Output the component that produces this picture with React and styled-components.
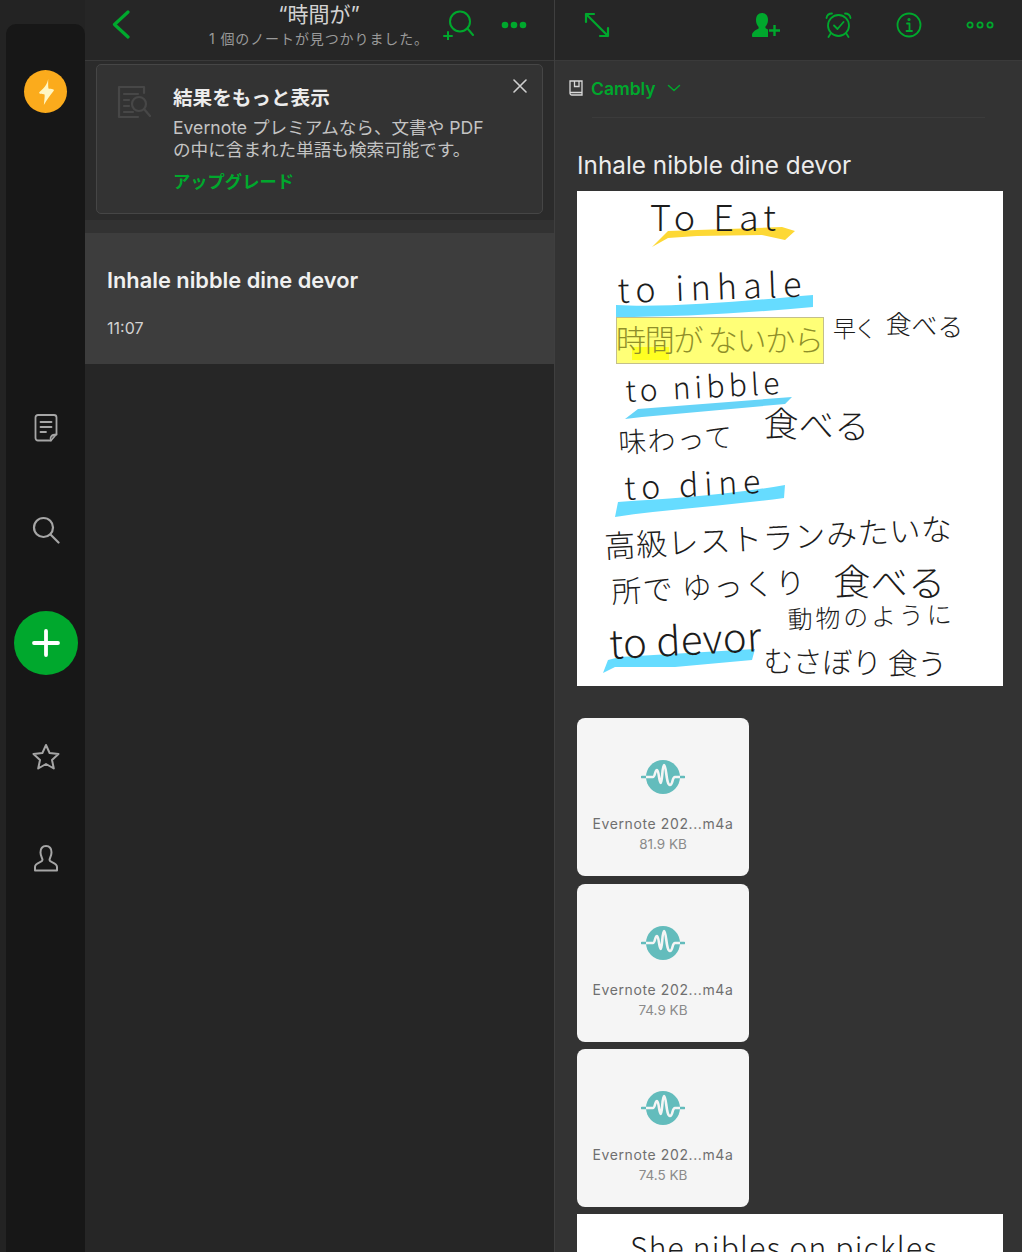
import React from 'react';
import styled, { createGlobalStyle } from 'styled-components';

const GREEN = '#00a82d';
const FONT = 'Inter, "Noto Sans CJK JP", sans-serif';

const attachments = [
  { name: 'Evernote 202...m4a', size: '81.9 KB' },
  { name: 'Evernote 202...m4a', size: '74.9 KB' },
  { name: 'Evernote 202...m4a', size: '74.5 KB' },
];

// the handwritten note: real text fitted to the widths of the strokes in the picture
const inks = [
  { t: 'To Eat', x: 73, y: 40, w: 126, s: 36 },
  { t: 'to inhale', x: 41, y: 112, w: 184, s: 34, r: -2 },
  { t: '時間が ないから', x: 39, y: 160, w: 208, s: 30, c: '#8f8f2a' },
  { t: '早く', x: 256, y: 146, w: 44, s: 23 },
  { t: '食べる', x: 308, y: 142, w: 78, s: 26, r: 3 },
  { t: 'to nibble', x: 49, y: 211, w: 154, s: 30, r: -3 },
  { t: '味わって', x: 42, y: 262, w: 114, s: 28, r: -3 },
  { t: '食べる', x: 186, y: 245, w: 106, s: 35, r: 2 },
  { t: 'to dine', x: 48, y: 309, w: 136, s: 32, r: -3 },
  { t: '高級レストランみたいな', x: 28, y: 367, w: 348, s: 31, r: -3 },
  { t: '所で ゆっくり', x: 35, y: 412, w: 194, s: 30, r: -3 },
  { t: '食べる', x: 256, y: 404, w: 112, s: 37, r: 1 },
  { t: '動物のように', x: 211, y: 438, w: 164, s: 25, r: -2 },
  { t: 'to devor', x: 33, y: 468, w: 152, s: 40, r: -3 },
  { t: 'むさぼり 食う', x: 186, y: 481, w: 184, s: 30, r: 1 },
];

const GlobalStyle = createGlobalStyle`
  html, body {
    margin: 0;
    padding: 0;
    height: 100%;
    background: #262626;
  }
  body {
    font-family: ${FONT};
    overflow: hidden;
  }
`;

const Page = styled.div`
  width: 1022px;
  height: 1252px;
  display: grid;
  grid-template-columns: 85px 470px 467px;
  overflow: hidden;
  background: #262626;
`;

const RailColumn = styled.div`
  padding: 24px 0 0 6px;
  background: #232323;
`;

const Rail = styled.nav`
  height: 100%;
  display: flex;
  flex-direction: column;
  align-items: center;
  padding: 46px 0 0;
  box-sizing: border-box;
  border-radius: 10px 10px 0 0;
  background: #171717;
`;

const Bolt = styled.div`
  width: 43px;
  height: 43px;
  margin-bottom: 264px;
  border-radius: 50%;
  background: #fbab1c;
  display: flex;
  align-items: center;
  justify-content: center;
`;

const RailSlot = styled.div`
  height: ${(p) => (p.$wide ? 124 : 102)}px;
  display: flex;
  align-items: center;
  justify-content: center;
  color: #a6a6a6;
`;

const AddButton = styled.div`
  width: 64px;
  height: 64px;
  border-radius: 50%;
  background: ${GREEN};
  display: flex;
  align-items: center;
  justify-content: center;
`;

const ListColumn = styled.section`
  display: flex;
  flex-direction: column;
  border-right: 1px solid #3f3f3f;
  background: #262626;
`;

const Bar = styled.header`
  height: 61px;
  flex: none;
  box-sizing: border-box;
  border-bottom: 1px solid #3a3a3a;
  background: #262626;
  color: ${GREEN};
`;

const ListBar = styled(Bar)`
  display: grid;
  grid-template-columns: 1fr auto 1fr;
  align-items: center;
  padding: 0 26px 13px 25px;
`;

const BarActions = styled.div`
  display: flex;
  align-items: center;
  justify-content: flex-end;
  gap: 25px;
`;

const BackSlot = styled.div`
  display: flex;
`;

const SearchTitle = styled.div`
  align-self: start;
  padding-top: 3px;
  text-align: center;
`;

const Query = styled.div`
  margin-bottom: 2px;
  font-size: 21px;
  line-height: 24px;
  color: #d2d2d2;
`;

const Found = styled.div`
  font-size: 14px;
  line-height: 20px;
  letter-spacing: 0.9px;
  color: #9a9a9a;
`;

const Banner = styled.div`
  flex: none;
  height: 159px;
  padding: 3px 11px 6px;
  box-sizing: border-box;
  background: #2b2b2b;
`;

const Upsell = styled.div`
  position: relative;
  height: 150px;
  display: flex;
  gap: 21px;
  padding: 20px 20px 0;
  box-sizing: border-box;
  border: 1px solid #464646;
  border-radius: 5px;
  background: #333333;
`;

const UpsellBody = styled.div`
  min-width: 0;
`;

const UpsellTitle = styled.div`
  font-size: 19.6px;
  font-weight: 700;
  line-height: 26px;
  color: #ececec;
`;

const UpsellText = styled.div`
  margin-top: 6px;
  font-size: 17.6px;
  line-height: 22px;
  color: #c4c4c4;
`;

const UpsellLink = styled.div`
  margin-top: 10px;
  font-size: 17.3px;
  font-weight: 700;
  line-height: 22px;
  color: ${GREEN};
`;

const Close = styled.div`
  position: absolute;
  top: 14px;
  right: 15px;
  display: flex;
  color: #cfcfcf;
`;

const Spacer = styled.div`
  flex: none;
  height: 13px;
  background: #323232;
`;

const NoteRow = styled.article`
  flex: none;
  height: 131px;
  padding: 32px 22px 0;
  box-sizing: border-box;
  background: #3d3d3d;
`;

const NoteTitle = styled.div`
  font-size: 21.8px;
  font-weight: 600;
  line-height: 30px;
  color: #f0f0f0;
`;

const NoteTime = styled.div`
  margin-top: 24px;
  font-size: 16px;
  line-height: 18px;
  color: #d2d2d2;
`;

const NoteColumn = styled.section`
  display: flex;
  flex-direction: column;
  min-width: 0;
  background: #333333;
`;

const NoteBar = styled(Bar)`
  display: flex;
  align-items: center;
  padding: 0 28px 10px 29px;
  gap: 44px;
`;

const Grow = styled.div`
  flex: 1;
`;

const Notebook = styled.div`
  height: 56px;
  display: flex;
  align-items: center;
  padding: 0 0 2px 14px;
  box-sizing: border-box;
  color: ${GREEN};
`;

const NotebookName = styled.span`
  margin: 0 11px 0 8px;
  font-size: 17.5px;
  font-weight: 600;
`;

const Divider = styled.div`
  height: 1px;
  margin: 0 37px;
  background: #3b3b3b;
`;

const Title = styled.h1`
  margin: 32px 0 11px 22px;
  font-size: 24.3px;
  font-weight: 400;
  line-height: 30px;
  color: #ececec;
`;

const Paper = styled.div`
  flex: none;
  width: 426px;
  margin-left: 22px;
  background: #fff;

  svg {
    display: block;
    overflow: visible;
  }
`;

const Cards = styled.div`
  display: flex;
  flex-direction: column;
  gap: 7.5px;
  margin: 32px 0 7px 22px;
`;

const Card = styled.div`
  width: 172px;
  height: 158px;
  display: flex;
  flex-direction: column;
  align-items: center;
  padding-top: 41px;
  box-sizing: border-box;
  border-radius: 8px;
  background: #f5f5f5;
`;

const CardName = styled.div`
  margin-top: 19px;
  font-size: 14px;
  line-height: 20px;
  letter-spacing: 0.6px;
  color: #6f6f6f;
`;

const CardSize = styled.div`
  font-size: 13.5px;
  line-height: 20px;
  color: #8a8a8a;
`;

const Ink = styled.text`
  font-family: "Noto Sans CJK JP", "DejaVu Sans", sans-serif;
  font-weight: 300;
  fill: ${(p) => p.$color || '#1c1c1c'};
`;

const Svg = ({ w, h, children, fill = 'none', width = 1.8, view }) => (
  <svg
    width={w}
    height={h}
    viewBox={view || `0 0 ${w} ${h}`}
    fill={fill}
    stroke={fill === 'none' ? 'currentColor' : 'none'}
    strokeWidth={width}
    strokeLinecap="round"
    strokeLinejoin="round"
  >
    {children}
  </svg>
);

const HandNote = () => (
  <svg width="426" height="495" viewBox="0 0 426 495">
    <path d="M75 56 L91 40 L150 38 L205 36 L218 40 L208 49 L185 44 L120 45 L91 47Z" fill="#fdd835" />
    <path d="M39 114 C90 117 170 110 236 104 L236 116 C170 122 100 126 39 126Z" fill="#66dcff" />
    <rect x="39.5" y="126.5" width="207" height="46" fill="#ffff77" stroke="#c4c08a" />
    <rect x="55" y="156" width="37" height="13" fill="#ffff22" />
    <path d="M48 228 L61 218 L215 206 L208 213 L65 226Z" fill="#66d4f8" />
    <path d="M38 326 L41 311 C90 308 150 304 208 294 L207 307 C150 315 90 318 38 326Z" fill="#66dcff" />
    <path d="M26 482 L31 469 L43 466 L178 458 L175 469 L98 476 L38 476Z" fill="#66dcff" />
    {inks.map((i) => (
      <Ink
        key={i.t + i.x}
        x={i.x}
        y={i.y}
        fontSize={i.s}
        textLength={i.w}
        lengthAdjust="spacing"
        $color={i.c}
        transform={i.r ? `rotate(${i.r} ${i.x} ${i.y})` : undefined}
      >
        {i.t}
      </Ink>
    ))}
  </svg>
);

const SecondPage = () => (
  <svg width="426" height="60" viewBox="0 0 426 60">
    <Ink x="53" y="45" fontSize="30" textLength="307" lengthAdjust="spacing">
      She nibles on pickles
    </Ink>
  </svg>
);

const AudioGlyph = () => (
  <svg width="44" height="36" viewBox="0 0 44 36">
    <circle cx="22" cy="18" r="17" fill="#63bcbc" />
    <path d="M1 18 H5.500 M38.500 18 H43" fill="none" stroke="#63bcbc" strokeWidth="2.600" strokeLinecap="round" />
    <path
      d="M5 18 H12 C14 18 14 11 16 11 C18 11 18 24 19.700 24 C21.500 24 21 6 23 6 C25.500 6 25 26 29 26 C32 26 31 18 34 18 H39"
      fill="none"
      stroke="#f5f5f5"
      strokeWidth="2.600"
    />
  </svg>
);

const Attachment = ({ name, size }) => (
  <Card>
    <AudioGlyph />
    <CardName>{name}</CardName>
    <CardSize>{size}</CardSize>
  </Card>
);

const Dots = ({ open }) => (
  <svg width="28" height="8" viewBox="0 0 28 8">
    {(open ? [4, 14, 24] : [5, 14, 23]).map((cx) => (
      <circle
        key={cx}
        cx={cx}
        cy="4"
        r={open ? 2.6 : 3.3}
        fill={open ? 'none' : 'currentColor'}
        stroke={open ? 'currentColor' : 'none'}
        strokeWidth="1.8"
      />
    ))}
  </svg>
);

export default function App() {
  return (
    <>
      <GlobalStyle />
      <Page>
        <RailColumn>
          <Rail>
            <Bolt>
              <svg width="20" height="28" viewBox="0 0 18 26">
                <path d="M11 1 C10 6 8 9 3 13 C2 14 3 15 7 15 C8 15 8 16 7 25 C10 20 12 17 16 12 C17 11 16 10 12 10 C11 10 11 9 11 1Z" fill="#fff6c2" />
              </svg>
            </Bolt>
            <RailSlot>
              <Svg w={24} h={30}>
                <path d="M4 2 H20 C21.500 2 22.500 3 22.500 4.500 V21 L17 27.500 H4 C2.500 27.500 1.500 26.500 1.500 25 V4.500 C1.500 3 2.500 2 4 2Z" />
                <path d="M17 27.500 C15.500 25 17 21.500 22.500 21.500" />
                <path d="M6.500 9 H17.500 M6.500 14 H17.500 M6.500 19 H12" />
              </Svg>
            </RailSlot>
            <RailSlot>
              <Svg w={28} h={28} width={2.2}>
                <circle cx="11.500" cy="11.500" r="9.500" />
                <path d="M18.500 18.500 L26.500 26.500" />
              </Svg>
            </RailSlot>
            <RailSlot $wide>
              <AddButton>
                <svg width="28" height="28" viewBox="0 0 28 28">
                  <path d="M14 2 V26 M2 14 H26" stroke="#fff" strokeWidth="3.800" strokeLinecap="round" />
                </svg>
              </AddButton>
            </RailSlot>
            <RailSlot>
              <Svg w={28} h={27} width={2}>
                <path d="M14 2 L17.600 10 L26.500 11 L20 17 L21.800 25.500 L14 21 L6.200 25.500 L8 17 L1.500 11 L10.400 10Z" />
              </Svg>
            </RailSlot>
            <RailSlot>
              <Svg w={26} h={28} width={2}>
                <path d="M13 2 C9 2 7.500 5 7.500 8.500 C7.500 12 9.500 14 9.500 16 C9.500 18.500 2 18.500 2 23 V26.500 H24 V23 C24 18.500 16.500 18.500 16.500 16 C16.500 14 18.500 12 18.500 8.500 C18.500 5 17 2 13 2Z" />
              </Svg>
            </RailSlot>
          </Rail>
        </RailColumn>

        <ListColumn>
          <ListBar>
            <BackSlot>
              <Svg w={22} h={30} width={3.2}>
                <path d="M18 2 L4.500 14.500 L18 27" />
              </Svg>
            </BackSlot>
            <SearchTitle>
              <Query>“時間が”</Query>
              <Found>1 個のノートが見つかりました。</Found>
            </SearchTitle>
            <BarActions>
              <Svg w={32} h={30} width={2}>
                <circle cx="17" cy="11.500" r="10" />
                <path d="M24.500 18.500 L30 25 M1 26 H9 M5 22 V30" />
              </Svg>
              <Dots />
            </BarActions>
          </ListBar>
          <Banner>
            <Upsell>
              <Svg w={35} h={34} width={2.2} view="0 0 35 34">
                <g stroke="#474747">
                  <path d="M27 8 V2 H2 V32 H21" />
                  <path d="M7 9 H21 M7 15 H12 M7 21 H12 M7 27 H16" />
                  <circle cx="22" cy="19" r="7" />
                  <path d="M27 24 L33 31" />
                </g>
              </Svg>
              <UpsellBody>
                <UpsellTitle>結果をもっと表示</UpsellTitle>
                <UpsellText>
                  Evernote プレミアムなら、文書や PDF
                  <br />
                  の中に含まれた単語も検索可能です。
                </UpsellText>
                <UpsellLink>アップグレード</UpsellLink>
              </UpsellBody>
              <Close>
                <Svg w={14} h={14} width={1.6}>
                  <path d="M1 1 L13 13 M13 1 L1 13" />
                </Svg>
              </Close>
            </Upsell>
          </Banner>
          <Spacer />
          <NoteRow>
            <NoteTitle>Inhale nibble dine devor</NoteTitle>
            <NoteTime>11:07</NoteTime>
          </NoteRow>
        </ListColumn>

        <NoteColumn>
          <NoteBar>
            <Svg w={26} h={26} width={2.2}>
              <path d="M2 2 L24 24 M2 10 V2 H10 M16 24 H24 V16" />
            </Svg>
            <Grow />
            <svg width="29" height="25" viewBox="0 0 29 25" fill="currentColor">
              <path d="M10 0 C14 0 16 3 16 7 C16 10 14.500 12.500 13.500 13.500 C13 15 14 15.500 16 16.500 V24 H1 C0 24 0 23.500 0 22 C0 18.500 5 16.500 6.500 15.500 C7 15 6.500 13.500 5.500 12.500 C4.500 11 4 9 4 7 C4 3 6 0 10 0Z" />
              <path d="M22.500 12 V23 M17 17.500 H28" stroke="currentColor" strokeWidth="2.400" fill="none" />
            </svg>
            <Svg w={27} h={26} width={1.8}>
              <circle cx="13.500" cy="13.500" r="10.500" />
              <path d="M9 13.500 L12.500 17 L18.500 10 M1.500 6 C2 3 4 1.500 7 1.500 M25.500 6 C25 3 23 1.500 20 1.500 M6 21 L3.500 25 M21 21 L23.500 25" />
            </Svg>
            <Svg w={26} h={26} width={1.8}>
              <circle cx="13" cy="13" r="11.500" />
              <path d="M11 11.500 H13.500 V19 M10.500 19 H16" />
              <circle cx="13" cy="7.500" r="0.700" />
            </Svg>
            <Dots open />
          </NoteBar>
          <Notebook>
            <svg width="14" height="16" viewBox="0 0 14 16">
              <path d="M1 1 H13 V15 H3 C1.500 15 1 14 1 13Z" fill="#3a3a3a" stroke="#d8d8d8" strokeWidth="1.300" />
              <path d="M1 12.500 H13 M5.500 1 V6.500 H10 V1" fill="none" stroke="#d8d8d8" strokeWidth="1.300" />
            </svg>
            <NotebookName>Cambly</NotebookName>
            <Svg w={14} h={8} width={1.5} view="0 0 14 8">
              <path d="M1.500 1.500 L7 6.500 L12.500 1.500" />
            </Svg>
          </Notebook>
          <Divider />
          <Title>Inhale nibble dine devor</Title>
          <Paper>
            <HandNote />
          </Paper>
          <Cards>
            {attachments.map((a) => (
              <Attachment key={a.size} name={a.name} size={a.size} />
            ))}
          </Cards>
          <Paper>
            <SecondPage />
          </Paper>
        </NoteColumn>
      </Page>
    </>
  );
}
